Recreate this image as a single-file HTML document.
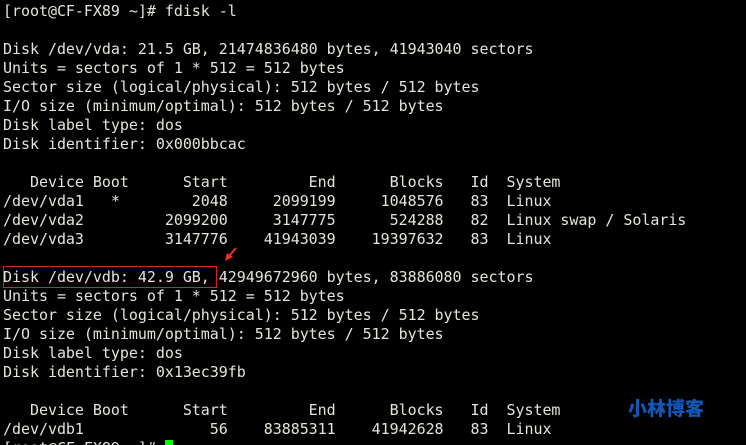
<!DOCTYPE html>
<html><head><meta charset="utf-8"><style>
html,body{margin:0;padding:0;background:#000;width:746px;height:445px;overflow:hidden}
pre{margin:0;padding:2px 0 0 3px;font-family:"DejaVu Sans Mono",monospace;font-size:15px;letter-spacing:-0.04px;line-height:19px;color:#e4e4dc;white-space:pre}
.box{position:absolute;left:3px;top:266px;width:212px;height:20px;border:1px solid #e0201c}
.cur{display:inline-block;width:8px;height:15px;background:#00ff00;vertical-align:-2px}
.logo{position:absolute;left:628px;top:394px;font-family:"Noto Sans CJK SC",sans-serif;font-weight:900;font-size:19px;color:#1058b8;letter-spacing:0px}
</style></head><body>
<pre>[root@CF-FX89 ~]# fdisk -l

Disk /dev/vda: 21.5 GB, 21474836480 bytes, 41943040 sectors
Units = sectors of 1 * 512 = 512 bytes
Sector size (logical/physical): 512 bytes / 512 bytes
I/O size (minimum/optimal): 512 bytes / 512 bytes
Disk label type: dos
Disk identifier: 0x000bbcac

   Device Boot      Start         End      Blocks   Id  System
/dev/vda1   *        2048     2099199     1048576   83  Linux
/dev/vda2         2099200     3147775      524288   82  Linux swap / Solaris
/dev/vda3         3147776    41943039    19397632   83  Linux

Disk /dev/vdb: 42.9 GB, 42949672960 bytes, 83886080 sectors
Units = sectors of 1 * 512 = 512 bytes
Sector size (logical/physical): 512 bytes / 512 bytes
I/O size (minimum/optimal): 512 bytes / 512 bytes
Disk label type: dos
Disk identifier: 0x13ec39fb

   Device Boot      Start         End      Blocks   Id  System
/dev/vdb1              56    83885311    41942628   83  Linux
[root@CF-FX89 ~]# <span class="cur"></span></pre>
<div class="box"></div>
<svg style="position:absolute;left:222px;top:246px" width="16" height="18"><path d="M14 2 L7 10" stroke="#e8302a" stroke-width="2"/><path d="M3 15 L5 7 L11 11 Z" fill="#e8302a"/></svg>
<div class="logo">小林博客</div>
</body></html>
